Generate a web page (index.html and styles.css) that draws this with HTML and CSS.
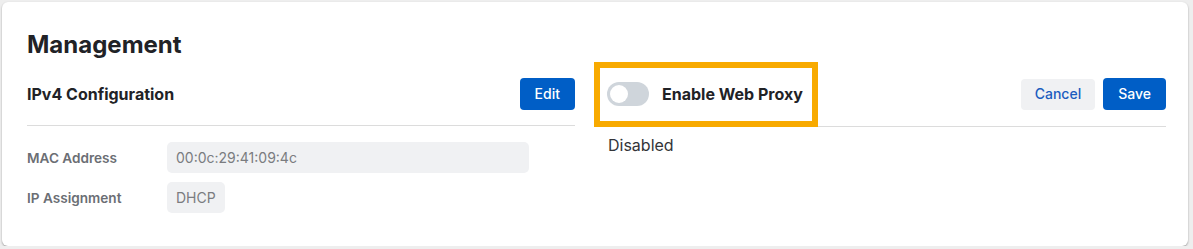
FILE: index.html
```html
<!DOCTYPE html>
<html lang="en">
<head>
<meta charset="utf-8">
<title>Management</title>
<link rel="stylesheet" href="styles.css">
</head>
<body>
<div class="card">
  <h1 class="title">Management</h1>
  <div class="columns">
    <section class="col col-left">
      <div class="col-head">
        <h2 class="col-title">IPv4 Configuration</h2>
        <button class="btn btn-primary">Edit</button>
      </div>
      <dl class="fields">
        <div class="field">
          <dt class="field-label">MAC Address</dt>
          <dd class="field-value field-value-wide">00:0c:29:41:09:4c</dd>
        </div>
        <div class="field">
          <dt class="field-label">IP Assignment</dt>
          <dd class="field-value">DHCP</dd>
        </div>
      </dl>
    </section>
    <section class="col col-right">
      <div class="col-head col-head-right">
        <label class="switch-wrap highlight">
          <span class="switch"><span class="switch-knob"></span></span>
          <span class="switch-label">Enable Web Proxy</span>
        </label>
        <div class="actions">
          <button class="btn btn-secondary">Cancel</button>
          <button class="btn btn-primary">Save</button>
        </div>
      </div>
      <p class="status">Disabled</p>
    </section>
  </div>
</div>
</body>
</html>
```

FILE: styles.css
```css
* { box-sizing: border-box; }
html, body {
  margin: 0;
  padding: 0;
  background: #eeeeee;
  font-family: Inter, "Noto Sans", "Liberation Sans", sans-serif;
  color: #222326;
}
.card {
  margin: 2px 0 0 2px;
  width: 1186px;
  height: 244px;
  background: #ffffff;
  border-radius: 6px;
  box-shadow: 0 1px 2px rgba(0, 0, 0, 0.35);
  padding: 26px 22px 0 25px;
}
.title {
  margin: 0;
  font-size: 24px;
  line-height: 34px;
  font-weight: 700;
  color: #212226;
}
.columns {
  display: grid;
  grid-template-columns: 548px 1fr;
  column-gap: 32px;
  margin-top: 16px;
}
.col-head {
  display: flex;
  align-items: center;
  justify-content: space-between;
  height: 48px;
  padding-bottom: 15px;
  border-bottom: 1px solid #dcdcdc;
}
.col-head-right {
  height: 49px;
  padding-bottom: 16px;
}
.col-title {
  margin: 0;
  font-size: 16px;
  line-height: 22px;
  font-weight: 700;
  color: #212226;
}
.btn {
  font-family: Inter, "Noto Sans", "Liberation Sans", sans-serif;
  font-size: 14px;
  font-weight: 500;
  line-height: 20px;
  height: 32px;
  padding: 0 15px;
  border: none;
  border-radius: 4px;
  cursor: pointer;
}
.btn-primary {
  background: #005ec6;
  color: #ffffff;
}
.btn-secondary {
  background: #f0f1f3;
  color: #1b5dbf;
  height: 31px;
  padding: 0 14px;
}
.actions {
  display: flex;
  align-items: center;
  gap: 8px;
}
.fields {
  margin: 16px 0 0 0;
  display: flex;
  flex-direction: column;
  gap: 9px;
}
.field {
  display: flex;
  align-items: center;
}
.field-label {
  width: 140px;
  font-size: 13.6px;
  font-weight: 600;
  color: #6b6e74;
}
.field-value {
  margin: 0;
  background: #f0f1f3;
  border-radius: 5px;
  padding: 5px 9px;
  font-size: 14px;
  line-height: 21px;
  color: #7a7c80;
}
.field-value-wide {
  width: 362px;
}
.switch-wrap {
  display: flex;
  align-items: center;
  gap: 13px;
  height: 39px;
  width: 198px;
}
.highlight {
  outline: 6px solid #f8aa00;
  outline-offset: 7px;
}
.switch {
  position: relative;
  display: block;
  width: 42px;
  height: 24px;
  border-radius: 12px;
  background: #cfd5db;
  flex: none;
}
.switch-knob {
  position: absolute;
  left: 3px;
  top: 3px;
  width: 18px;
  height: 18px;
  border-radius: 50%;
  background: #ffffff;
}
.switch-label {
  font-size: 16px;
  font-weight: 700;
  color: #212226;
  white-space: nowrap;
}
.status {
  margin: 7px 0 0 1px;
  font-size: 16px;
  line-height: 22px;
  color: #333438;
}
```
